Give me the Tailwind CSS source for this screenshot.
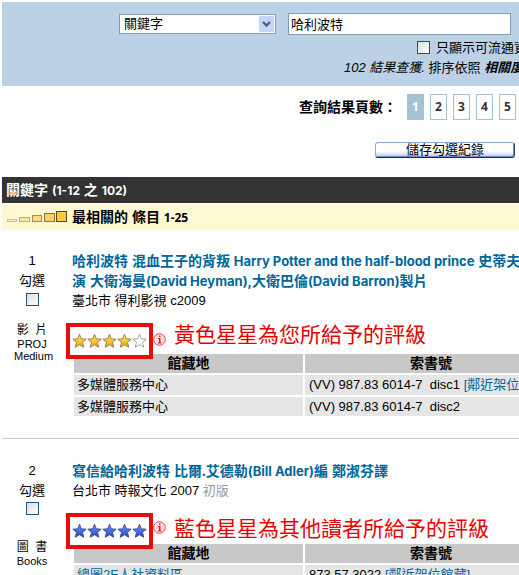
<!DOCTYPE html>
<html lang="zh-Hant">
  <head>
    <meta charset="UTF-8" />
    <meta name="viewport" content="width=device-width, initial-scale=1.0" />
    <title>查詢結果</title>
    <script src="https://cdn.jsdelivr.net/npm/@tailwindcss/browser@4"></script>
  </head>
  <body
    class="h-screen overflow-hidden bg-white pt-[2px] pl-[2px] font-['Liberation_Sans','Noto_Sans_CJK_TC',sans-serif] text-[13px] leading-5 whitespace-nowrap text-black"
  >
    <!-- shared star and info shapes -->
    <svg class="absolute size-0" aria-hidden="true">
      <defs>
        <linearGradient id="gold" x1="0" y1="0" x2="0" y2="1">
          <stop offset="0" stop-color="#fff04a" />
          <stop offset="1" stop-color="#f0a010" />
        </linearGradient>
        <linearGradient id="blue" x1="0" y1="0" x2="0" y2="1">
          <stop offset="0" stop-color="#6f9cf5" />
          <stop offset="1" stop-color="#1f45d0" />
        </linearGradient>
        <symbol id="star" viewBox="0 0 15 16">
          <path d="M7.5 1.2 9.3 5.8 14.2 6.2 10.5 9.4 11.8 14.3 7.5 11.7 3.2 14.3 4.5 9.4 0.8 6.2 5.7 5.8Z" stroke-linejoin="round" />
        </symbol>
        <symbol id="info" viewBox="0 0 13 13">
          <circle cx="6.500" cy="6.500" r="5.800" fill="#fde0e0" stroke="#e04848" />
          <path d="M6 2.500h1.500V4H6ZM5 5h2.500v4.500h1v1H5v-1h1V6H5Z" fill="#d42020" />
        </symbol>
      </defs>
    </svg>

    <form class="h-[84px] bg-[#bbd1e6] pt-[11px]">
      <div class="flex items-center gap-3 pl-[117px]">
        <div class="relative w-[157px] shrink-0">
          <select
            aria-label="查詢欄位"
            class="block h-5 w-full appearance-none border border-[#7f9db9] bg-white pl-1 text-[13px] leading-4"
          >
            <option>關鍵字</option>
          </select>
          <svg class="pointer-events-none absolute top-[2px] right-[2px]" width="15" height="16" viewBox="0 0 15 16">
            <rect width="15" height="16" rx="1" fill="#c5d5fb" />
            <path d="M4 6l3.500 3.500L11 6" fill="none" stroke="#4d6185" stroke-width="2.400" />
          </svg>
        </div>
        <input
          type="text"
          aria-label="查詢詞"
          value="哈利波特"
          class="h-[22px] w-[223px] shrink-0 border border-[#7f9db9] bg-white px-[2px] pb-[2px] text-[13px]"
        />
      </div>
      <div class="mt-px flex items-center gap-[6px] pl-[415px]">
        <input
          type="checkbox"
          id="available"
          class="size-[13px] shrink-0 appearance-none border border-[#1c5180] bg-linear-to-br from-[#dcdcd7] to-white"
        />
        <label for="available" class="pt-[2px]">只顯示可流通資料</label>
      </div>
      <p class="pl-[342px]">
        <i>102 結果查獲.</i> 排序依照 <b><i>相關度</i></b>
      </p>
    </form>

    <nav class="mt-2 flex items-center gap-[6px] pl-[297px]">
      <span class="mr-1 text-sm font-bold">查詢結果頁數：</span>
      <a href="#" class="h-[26px] w-[17px] shrink-0 border border-[#a5c1d2] bg-[#a5c1d2] text-center font-['Open_Sans',sans-serif] text-xs leading-6 font-bold text-white">1</a>
      <a href="#" class="h-[26px] w-[17px] shrink-0 border border-[#a5c1d2] text-center font-['Open_Sans',sans-serif] text-xs leading-6 font-bold text-[#333]">2</a>
      <a href="#" class="h-[26px] w-[17px] shrink-0 border border-[#a5c1d2] text-center font-['Open_Sans',sans-serif] text-xs leading-6 font-bold text-[#333]">3</a>
      <a href="#" class="h-[26px] w-[17px] shrink-0 border border-[#a5c1d2] text-center font-['Open_Sans',sans-serif] text-xs leading-6 font-bold text-[#333]">4</a>
      <a href="#" class="h-[26px] w-[17px] shrink-0 border border-[#a5c1d2] text-center font-['Open_Sans',sans-serif] text-xs leading-6 font-bold text-[#333]">5</a>
    </nav>

    <button
      type="button"
      class="mt-[22px] ml-[373px] flex h-4 w-[140px] items-center justify-center rounded-[3px] border border-[#8fa6e0] border-r-[#2a3f80] border-b-[#16285c] bg-linear-to-b from-white from-60% to-[#b4c5f3] shadow-[inset_-1px_-1px_0_#7088cc]"
    >
      儲存勾選紀錄
    </button>

    <h1 class="mt-[19px] h-[26px] bg-[#333] pl-1 text-sm leading-[27px] font-bold text-white">
      關鍵字 <span class="font-['Inter',sans-serif] text-xs">(1-12</span> 之
      <span class="font-['Inter',sans-serif] text-xs">102)</span>
    </h1>
    <div class="mt-px flex h-[26px] items-center gap-[5px] bg-[#fff8d3] pl-[5px] text-sm font-bold">
      <svg width="60" height="14" viewBox="0 0 60 14" stroke-width="1">
        <rect x=".5" y="9.500" width="9" height="2" fill="#fdf0c8" stroke="#c4bfb0" />
        <rect x="12.500" y="7.500" width="10" height="4" fill="#fbe3a0" stroke="#b8ad90" />
        <rect x="25.500" y="5.500" width="9" height="6" fill="#fbd982" stroke="#9c8a60" />
        <rect x="37.500" y="3.500" width="10" height="8" fill="#fbd05c" stroke="#8c7440" />
        <rect x="49.500" y="1.500" width="10" height="10" fill="#fcc93c" stroke="#5c4a20" />
      </svg>
      <h2>最相關的 條目 <span class="font-['Open_Sans',sans-serif] text-xs">1-25</span></h2>
    </div>

    <article class="mt-[21px] flex gap-[10px]">
      <div class="flex w-15 shrink-0 flex-col items-center">
        <span>1</span>
        <label for="pick1">勾選</label>
        <input
          type="checkbox"
          id="pick1"
          class="mt-[2px] size-[13px] appearance-none border border-[#1c5180] bg-linear-to-br from-[#dcdcd7] to-white"
        />
        <span class="mt-4 text-xs leading-4">影&nbsp; 片</span>
        <span class="text-[11px] leading-3">PROJ</span>
        <span class="text-[11px] leading-3">&nbsp;Medium</span>
      </div>
      <div class="grow">
        <a href="#" class="block text-sm leading-5 font-bold text-[#006699]">
          哈利波特 混血王子的背叛
          <span class="font-['Inter',sans-serif] text-[13px]">Harry Potter and the half-blood prince</span> 史蒂夫<br />
          演 大衛海曼<span class="font-['Inter',sans-serif] text-[13px]">(David Heyman),</span>大衛巴倫<span class="font-['Inter',sans-serif] text-[13px]">(David Barron)</span>製片
        </a>
        <p>臺北市 得利影視 c2009</p>
        <div class="relative -mb-[7px] -ml-[6px] mt-3 flex">
          <div class="flex h-9 w-[87px] shrink-0 items-center justify-center border-4 border-[#e60d0d] bg-white">
            <svg width="75" height="16" viewBox="0 0 75 16" fill="url(#gold)" stroke="#8a7a50" stroke-width=".9">
              <use href="#star" x="0" width="15" height="16" />
              <use href="#star" x="15" width="15" height="16" />
              <use href="#star" x="30" width="15" height="16" />
              <use href="#star" x="45" width="15" height="16" />
              <use href="#star" x="60" width="15" height="16" fill="#fff" stroke="#999" />
            </svg>
          </div>
          <svg class="mt-[10px] shrink-0" width="13" height="13"><use href="#info" width="13" height="13" /></svg>
          <p class="ml-2 text-[21px] leading-6 text-[#e60000]">黃色星星為您所給予的評級</p>
        </div>
        <table class="w-[487px] table-fixed border-separate border-spacing-[2px]">
          <thead>
            <tr class="bg-[#c8c8c8] text-sm leading-[19px]">
              <th class="w-[229px] p-0">館藏地</th>
              <th class="p-0">索書號</th>
            </tr>
          </thead>
          <tbody>
            <tr class="bg-[#e5e5e5]">
              <td class="px-[3px] py-0 leading-5">多媒體服務中心</td>
              <td class="px-1 py-0 leading-5">(VV) 987.83 6014-7 &nbsp;disc1 <a href="#" class="text-[#006699]">[鄰近架位館藏]</a></td>
            </tr>
            <tr class="bg-[#e5e5e5]">
              <td class="px-[3px] py-0 leading-[19px]">多媒體服務中心</td>
              <td class="px-1 py-0 leading-[19px]">(VV) 987.83 6014-7 &nbsp;disc2</td>
            </tr>
          </tbody>
        </table>
      </div>
    </article>

    <hr class="mt-5 border-[#c8c8c8]" />

    <article class="mt-[22px] flex gap-[10px]">
      <div class="flex w-15 shrink-0 flex-col items-center">
        <span>2</span>
        <label for="pick2">勾選</label>
        <input
          type="checkbox"
          id="pick2"
          class="mt-px size-[13px] appearance-none border border-[#1c5180] bg-linear-to-br from-[#dcdcd7] to-white"
        />
        <span class="mt-6 text-xs leading-4">圖&nbsp; 書</span>
        <span class="text-[11px] leading-3">Books</span>
      </div>
      <div class="grow">
        <a href="#" class="block text-sm leading-5 font-bold text-[#006699]">
          寫信給哈利波特 比爾.艾德勒<span class="font-['Inter',sans-serif] text-[13px]">(Bill Adler)</span>編 鄭淑芬譯
        </a>
        <p>台北市 時報文化 2007 <span class="text-[#999]">初版</span></p>
        <div class="relative -mb-[7px] -ml-[6px] mt-3 flex">
          <div class="flex h-9 w-[87px] shrink-0 items-center justify-center border-4 border-[#e60d0d] bg-white">
            <svg width="75" height="16" viewBox="0 0 75 16" fill="url(#blue)" stroke="#3a4a80" stroke-width=".9">
              <use href="#star" x="0" width="15" height="16" />
              <use href="#star" x="15" width="15" height="16" />
              <use href="#star" x="30" width="15" height="16" />
              <use href="#star" x="45" width="15" height="16" />
              <use href="#star" x="60" width="15" height="16" />
            </svg>
          </div>
          <svg class="mt-2 shrink-0" width="13" height="13"><use href="#info" width="13" height="13" /></svg>
          <p class="ml-2 pt-1 text-[21px] leading-6 text-[#ee0000]">藍色星星為其他讀者所給予的評級</p>
        </div>
        <table class="w-[487px] table-fixed border-separate border-spacing-[2px]">
          <thead>
            <tr class="bg-[#c8c8c8] text-sm leading-[19px]">
              <th class="w-[229px] p-0">館藏地</th>
              <th class="p-0">索書號</th>
            </tr>
          </thead>
          <tbody>
            <tr class="bg-[#e5e5e5]">
              <td class="px-[3px] py-0 leading-5"><a href="#" class="text-[#006699]">總圖2F人社資料區</a></td>
              <td class="px-1 py-0 leading-5">873.57 3022 <a href="#" class="text-[#006699]">[鄰近架位館藏]</a></td>
            </tr>
          </tbody>
        </table>
      </div>
    </article>
  </body>
</html>
